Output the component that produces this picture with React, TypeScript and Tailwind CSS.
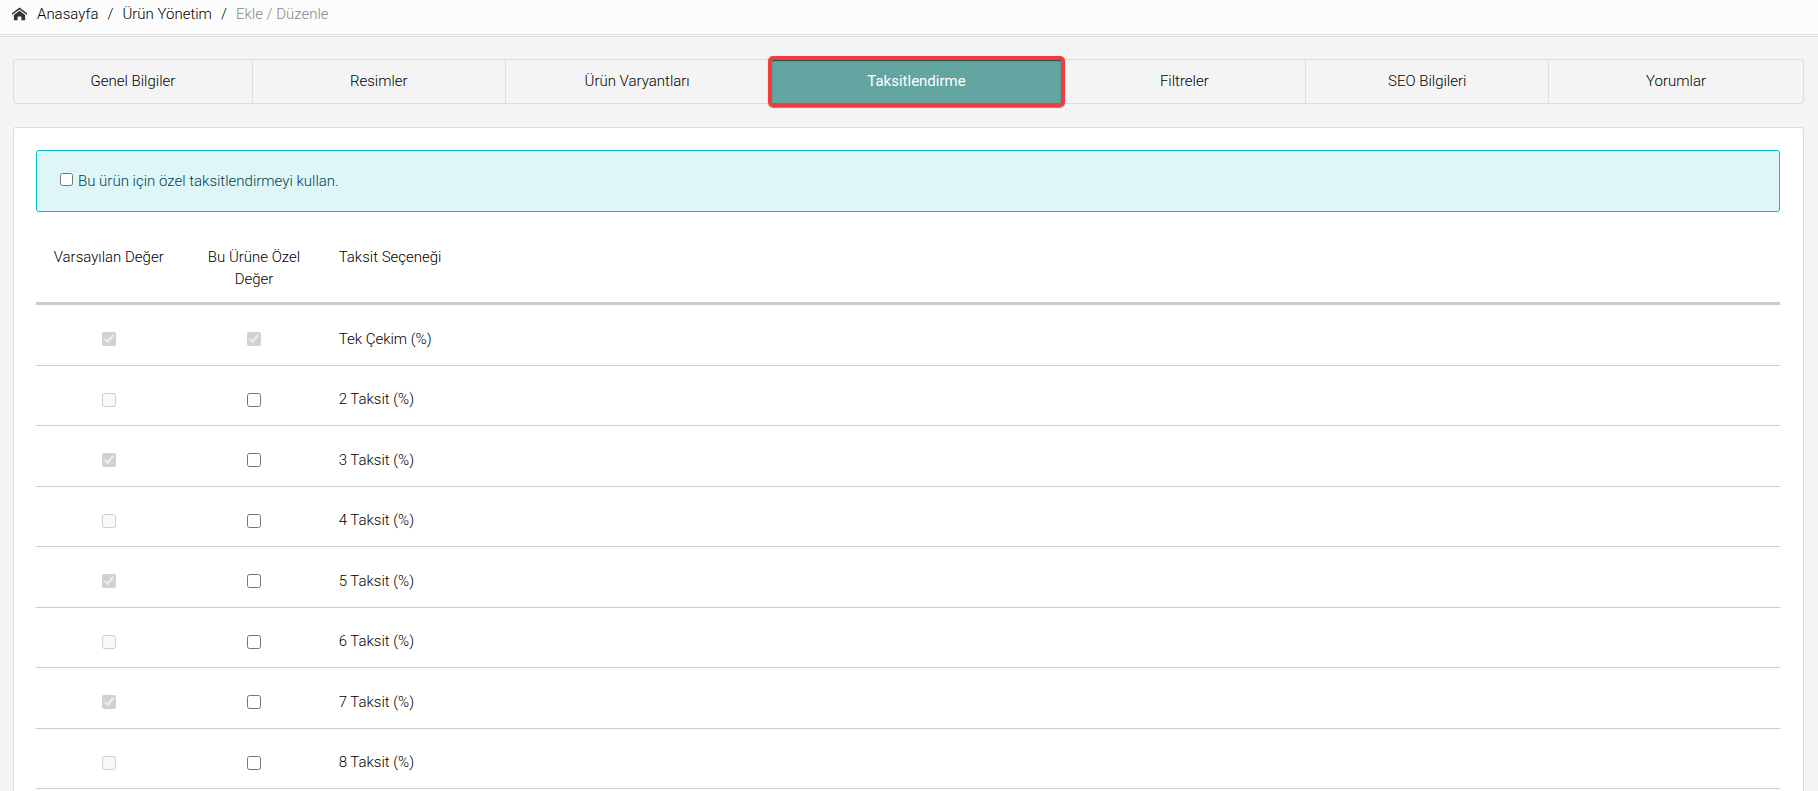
import React from 'react';

const tabs = [
  { label: 'Genel Bilgiler' },
  { label: 'Resimler' },
  { label: 'Ürün Varyantları' },
  { label: 'Taksitlendirme', active: true },
  { label: 'Filtreler' },
  { label: 'SEO Bilgileri' },
  { label: 'Yorumlar' },
];

const installments = [
  { id: 1, label: 'Tek Çekim (%)', standard: true, custom: true, locked: true },
  { id: 2, label: '2 Taksit (%)', standard: false },
  { id: 3, label: '3 Taksit (%)', standard: true },
  { id: 4, label: '4 Taksit (%)', standard: false },
  { id: 5, label: '5 Taksit (%)', standard: true },
  { id: 6, label: '6 Taksit (%)', standard: false },
  { id: 7, label: '7 Taksit (%)', standard: true },
  { id: 8, label: '8 Taksit (%)', standard: false },
];

const HomeIcon = () => (
  <svg viewBox="0 0 16 16" className="w-[15px] h-[15px] text-[#333]" fill="currentColor" aria-hidden="true">
    <path d="M16 8.6 8 2.6 0 8.6V6.6L8 .6l8 6z" />
    <path d="M14 8.6V14h-4v-4H6v4H2V8.6l6-4.5z" />
  </svg>
);

const Breadcrumb = () => (
  <nav aria-label="Breadcrumb" className="bg-[#fcfcfc] border-b border-[#ddd]">
    <ol className="flex items-center h-[35px] px-3 pb-[6px] border-b border-[#ddd] mb-px">
      <li>
        <a href="#anasayfa" className="flex items-center gap-[10px]">
          <HomeIcon />
          Anasayfa
        </a>
      </li>
      <li aria-hidden="true" className="px-[9px]">/</li>
      <li>
        <a href="#urun-yonetim">Ürün Yönetim</a>
      </li>
      <li aria-hidden="true" className="px-[9px]">/</li>
      <li className="text-[#888]">Ekle / Düzenle</li>
    </ol>
  </nav>
);

const Tabs = () => (
  <div
    role="tablist"
    className="grid grid-cols-[239fr_253fr_264fr_294fr_243fr_243fr_254fr] h-[45px] border border-[#ddd] rounded-[3px]"
  >
    {tabs.map((tab) =>
      tab.active ? (
        <div key={tab.label} className="relative flex">
          <button role="tab" aria-selected="true" className="flex-1 pb-[2px] bg-[#62a5a1] font-normal text-white">
            {tab.label}
          </button>
          {/* highlight frame around the selected tab */}
          <span className="absolute -inset-x-[2px] -inset-y-[4px] border-4 border-[#f23c3c] rounded-[5px] shadow-[0_1px_1px_rgba(0,0,0,0.45),inset_0_1px_1px_rgba(0,0,0,0.6)] pointer-events-none" />
        </div>
      ) : (
        <button
          key={tab.label}
          role="tab"
          aria-selected="false"
          className="pb-[2px] border-r border-[#ddd] last:border-r-0"
        >
          {tab.label}
        </button>
      )
    )}
  </div>
);

const InstallmentTable = () => (
  <table className="w-full table-fixed border-separate border-spacing-0">
    <thead>
      <tr className="align-top">
        <th scope="col" className="w-1/12 px-3 pb-3 font-light border-b-[3px] border-[#ccc]">
          Varsayılan Değer
        </th>
        <th scope="col" className="w-1/12 px-3 pb-3 font-light border-b-[3px] border-[#ccc]">
          Bu Ürüne Özel Değer
        </th>
        <th scope="col" className="px-3 pb-3 font-light text-left border-b-[3px] border-[#ccc]">
          Taksit Seçeneği
        </th>
      </tr>
    </thead>
    <tbody>
      {installments.map((row) => (
        <tr key={row.id} className="odd:h-[61px] even:h-[60px]">
          <td className="pt-2 border-b border-[#ccc]">
            <input
              type="checkbox"
              disabled
              defaultChecked={row.standard}
              aria-label={`Varsayılan: ${row.label}`}
              className="block mx-auto w-[14px] h-[14px]"
            />
          </td>
          <td className="pt-2 border-b border-[#ccc]">
            <input
              id={`taksit-${row.id}`}
              type="checkbox"
              disabled={row.locked}
              defaultChecked={row.custom}
              className="block mx-auto w-[14px] h-[14px]"
            />
          </td>
          <td className="pt-[7px] px-3 border-b border-[#ccc]">
            <label htmlFor={`taksit-${row.id}`}>{row.label}</label>
          </td>
        </tr>
      ))}
    </tbody>
  </table>
);

export default function App() {
  return (
    <div className="flex flex-col min-h-screen bg-[#f4f4f4] text-[15px] leading-[22px] font-light text-black font-['Roboto',sans-serif]">
      <Breadcrumb />
      <main className="flex flex-col flex-1 pt-[22px] pl-[13px] pr-[14px]">
        <Tabs />
        <section className="flex-1 mt-[23px] pl-[22px] pr-[23px] pt-[22px] bg-white border border-b-0 border-[#ddd] rounded-t-[3px]">
          <div className="flex items-center h-[62px] px-[23px] bg-[#dff6f9] border border-[#00bcd4] rounded-[3px] text-[#003f49]">
            <input id="ozel-taksit" type="checkbox" className="w-[13px] h-[13px] mr-[5px] mb-[3px]" />
            <label htmlFor="ozel-taksit">Bu ürün için özel taksitlendirmeyi kullan.</label>
          </div>
          <div className="pt-[34px]">
            <InstallmentTable />
          </div>
        </section>
      </main>
    </div>
  );
}
